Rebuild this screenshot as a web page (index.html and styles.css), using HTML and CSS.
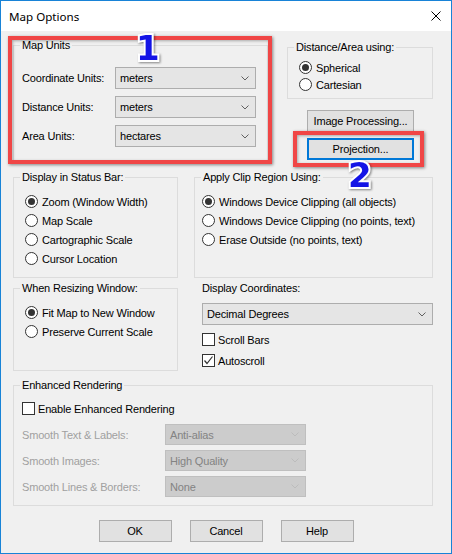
FILE: index.html
```html
<!DOCTYPE html>
<html lang="en">
<head>
<meta charset="utf-8">
<title>Map Options</title>
<link rel="stylesheet" href="styles.css">
</head>
<body>
<div class="window">
  <div class="titlebar">
    <span class="title">Map Options</span>
    <svg class="close" viewBox="0 0 10 10" aria-label="Close"><path d="M0.5 0.5 L9.5 9.5 M9.5 0.5 L0.5 9.5" stroke="#000" stroke-width="1" fill="none"/></svg>
  </div>

  <div class="content">
    <div class="row row-top">
      <fieldset class="group units">
        <legend>Map Units</legend>
        <div class="field-grid">
          <span class="label">Coordinate Units:</span>
          <div class="combo"><span>meters</span><svg class="chev" viewBox="0 0 8 5"><path d="M0.5 0.5 L4 4 L7.5 0.5" fill="none" stroke="#606060" stroke-width="1"/></svg></div>
          <span class="label">Distance Units:</span>
          <div class="combo"><span>meters</span><svg class="chev" viewBox="0 0 8 5"><path d="M0.5 0.5 L4 4 L7.5 0.5" fill="none" stroke="#606060" stroke-width="1"/></svg></div>
          <span class="label">Area Units:</span>
          <div class="combo"><span>hectares</span><svg class="chev" viewBox="0 0 8 5"><path d="M0.5 0.5 L4 4 L7.5 0.5" fill="none" stroke="#606060" stroke-width="1"/></svg></div>
        </div>
      </fieldset>

      <div class="side">
        <fieldset class="group distance">
          <legend>Distance/Area using:</legend>
          <div class="radio tight on"><span class="dot"></span>Spherical</div>
          <div class="radio tight"><span class="dot"></span>Cartesian</div>
        </fieldset>
        <button class="btn side-btn first">Image Processing...</button>
        <button class="btn side-btn second focused">Projection...</button>
      </div>
    </div>

    <div class="row row-mid">
      <fieldset class="group status">
        <legend>Display in Status Bar:</legend>
        <div class="radio on"><span class="dot"></span>Zoom (Window Width)</div>
        <div class="radio"><span class="dot"></span>Map Scale</div>
        <div class="radio"><span class="dot"></span>Cartographic Scale</div>
        <div class="radio"><span class="dot"></span>Cursor Location</div>
      </fieldset>
      <fieldset class="group clip">
        <legend>Apply Clip Region Using:</legend>
        <div class="radio on"><span class="dot"></span>Windows Device Clipping (all objects)</div>
        <div class="radio"><span class="dot"></span>Windows Device Clipping (no points, text)</div>
        <div class="radio"><span class="dot"></span>Erase Outside (no points, text)</div>
      </fieldset>
    </div>

    <div class="row row-low">
      <fieldset class="group resize">
        <legend>When Resizing Window:</legend>
        <div class="radio on"><span class="dot"></span>Fit Map to New Window</div>
        <div class="radio"><span class="dot"></span>Preserve Current Scale</div>
      </fieldset>
      <div class="coords">
        <div class="coords-label">Display Coordinates:</div>
        <div class="combo coords-combo"><span>Decimal Degrees</span><svg class="chev" viewBox="0 0 8 5"><path d="M0.5 0.5 L4 4 L7.5 0.5" fill="none" stroke="#606060" stroke-width="1"/></svg></div>
        <div class="check first-check"><span class="box"></span>Scroll Bars</div>
        <div class="check"><span class="box"><svg viewBox="0 0 11 11"><path d="M1.5 5.5 L4 8.5 L9.5 1.5" fill="none" stroke="#333" stroke-width="1.2"/></svg></span>Autoscroll</div>
      </div>
    </div>

    <fieldset class="group enhanced">
      <legend>Enhanced Rendering</legend>
      <div class="check"><span class="box"></span>Enable Enhanced Rendering</div>
      <div class="disabled-grid">
        <span class="label dim">Smooth Text &amp; Labels:</span>
        <div class="combo off"><span>Anti-alias</span><svg class="chev" viewBox="0 0 8 5"><path d="M0.5 0.5 L4 4 L7.5 0.5" fill="none" stroke="#bcbcbc" stroke-width="1"/></svg></div>
        <span class="label dim">Smooth Images:</span>
        <div class="combo off"><span>High Quality</span><svg class="chev" viewBox="0 0 8 5"><path d="M0.5 0.5 L4 4 L7.5 0.5" fill="none" stroke="#bcbcbc" stroke-width="1"/></svg></div>
        <span class="label dim">Smooth Lines &amp; Borders:</span>
        <div class="combo off"><span>None</span><svg class="chev" viewBox="0 0 8 5"><path d="M0.5 0.5 L4 4 L7.5 0.5" fill="none" stroke="#bcbcbc" stroke-width="1"/></svg></div>
      </div>
    </fieldset>

    <div class="buttons">
      <button class="btn dlg-btn">OK</button>
      <button class="btn dlg-btn">Cancel</button>
      <button class="btn dlg-btn">Help</button>
    </div>
  </div>

  <!-- annotation callouts drawn on top of the dialog -->
  <div class="callout callout-units"></div>
  <div class="callout callout-projection"></div>
  <span class="mark mark-one">1</span>
  <span class="mark mark-two">2</span>
</div>
</body>
</html>
```

FILE: styles.css
```css
* {
  box-sizing: border-box;
}

html,
body {
  margin: 0;
  padding: 0;
  background: #fff;
}

body {
  font-family: "Liberation Sans", Arial, sans-serif;
  font-size: 11px;
  letter-spacing: -0.17px;
  color: #000;
}

/* window frame */
.window {
  position: relative;
  width: 452px;
  height: 554px;
  border: 1px solid #1883d7;
  background: #f0f0f0;
  display: flex;
  flex-direction: column;
  overflow: hidden;
}

.titlebar {
  flex: none;
  height: 30px;
  background: #fff;
  display: flex;
  align-items: center;
  justify-content: space-between;
  padding: 0 10px 0 8px;
}

.title {
  font-family: "Noto Sans", "Open Sans", sans-serif;
  font-size: 11.6px;
  letter-spacing: 0;
  color: #000;
}

.close {
  width: 10px;
  height: 10px;
  display: block;
}

.content {
  flex: 1;
  display: flex;
  flex-direction: column;
  padding: 8px 0 0 12px;
}

.row {
  display: flex;
  align-items: flex-start;
}

/* group boxes */
fieldset.group {
  margin: 0;
  padding: 0 0 0 8px;
  border: 1px solid #dcdcdc;
  min-width: 0;
}

fieldset.group legend {
  padding: 0 2px;
  margin-left: -2px;
  line-height: 13px;
}

.units {
  width: 255px;
  height: 122px;
  padding-top: 15px !important;
}

.field-grid {
  display: grid;
  grid-template-columns: 93px 141px;
  row-gap: 7px;
  align-items: center;
}

.side {
  margin-left: 19px;
  width: 146px;
  display: flex;
  flex-direction: column;
}

.distance {
  margin-top: 2px !important;
  height: 58px;
  padding-top: 5px !important;
}

.side-btn {
  margin-left: 20px;
  width: 107px;
}

.side-btn.first {
  margin-top: 11px;
}

.side-btn.second {
  margin-top: 6px;
}

.row-mid {
  margin-top: 10px;
}

.status {
  width: 165px;
  height: 107px;
  padding-top: 8px !important;
}

.clip {
  margin-left: 16px !important;
  width: 239px;
  height: 107px;
  padding-top: 8px !important;
}

.clip .radio .dot {
  margin-left: -1px;
}

.row-low {
  margin-top: 4px;
}

.resize {
  width: 165px;
  height: 89px;
  padding-top: 8px !important;
}

.coords {
  margin-left: 24px;
  width: 231px;
  display: flex;
  flex-direction: column;
}

.coords-label {
  line-height: 13px;
}

.coords-combo {
  margin-top: 8px;
}

.first-check {
  margin-top: 4px;
}

.enhanced {
  margin-top: 8px !important;
  width: 420px;
  height: 127px;
  padding-top: 6px !important;
}

.disabled-grid {
  margin-top: 5px;
  display: grid;
  grid-template-columns: 143px 141px;
  row-gap: 5px;
  align-items: center;
}

.disabled-grid .combo {
  height: 21px;
}

.label.dim {
  color: #a0a0a0;
}

/* radio buttons */
.radio {
  display: flex;
  align-items: center;
  height: 19px;
  white-space: nowrap;
}

.radio.tight {
  height: 17px;
}

.radio .dot {
  flex: none;
  width: 13px;
  height: 13px;
  margin: 0 4px 0 3px;
  border: 1px solid #333;
  border-radius: 50%;
  background: #fff;
  display: flex;
  align-items: center;
  justify-content: center;
}

.radio.on .dot::after {
  content: "";
  width: 7px;
  height: 7px;
  border-radius: 50%;
  background: #333;
}

/* check boxes */
.check {
  display: flex;
  align-items: center;
  height: 21px;
  white-space: nowrap;
}

.check .box {
  flex: none;
  width: 13px;
  height: 13px;
  margin-right: 3px;
  border: 1px solid #333;
  background: #fff;
  display: flex;
}

.check .box svg {
  width: 11px;
  height: 11px;
}

/* drop-down lists */
.combo {
  height: 22px;
  border: 1px solid #adadad;
  background: #e5e5e5;
  display: flex;
  align-items: center;
  justify-content: space-between;
  padding: 0 6px 0 4px;
  white-space: nowrap;
}

.combo .chev {
  width: 8px;
  height: 5px;
  display: block;
}

.combo.off {
  background: #cccccc;
  border-color: #bfbfbf;
  color: #838383;
}

/* push buttons */
.btn {
  font: inherit;
  letter-spacing: inherit;
  color: #000;
  height: 22px;
  padding: 0;
  border: 1px solid #adadad;
  background: #e1e1e1;
  text-align: center;
}

.btn.focused {
  border-color: #0078d7;
  box-shadow: inset 0 0 0 1px #0078d7;
}

.buttons {
  margin: 14px 0 0 -12px;
  display: flex;
  justify-content: center;
  gap: 18px;
}

.dlg-btn {
  width: 73px;
}

/* annotation overlays */
.callout {
  position: absolute;
  border: 4px solid #f04646;
  box-shadow: 1px 1px 3px rgba(0, 0, 0, 0.45), inset 1px 1px 3px rgba(0, 0, 0, 0.3);
  pointer-events: none;
}

.callout-units {
  left: 7px;
  top: 35px;
  width: 264px;
  height: 128px;
}

.callout-projection {
  left: 292px;
  top: 130px;
  width: 131px;
  height: 36px;
}

.mark {
  position: absolute;
  font-family: "DejaVu Sans", sans-serif;
  font-weight: bold;
  font-size: 34px;
  letter-spacing: 0;
  line-height: 1;
  color: #1414e6;
  -webkit-text-stroke: 4px #fff;
  paint-order: stroke fill;
  filter: drop-shadow(1px 1px 1px rgba(0, 0, 0, 0.45));
}

.mark-one {
  left: 135px;
  top: 30px;
}

.mark-two {
  left: 347px;
  top: 157px;
}
```
